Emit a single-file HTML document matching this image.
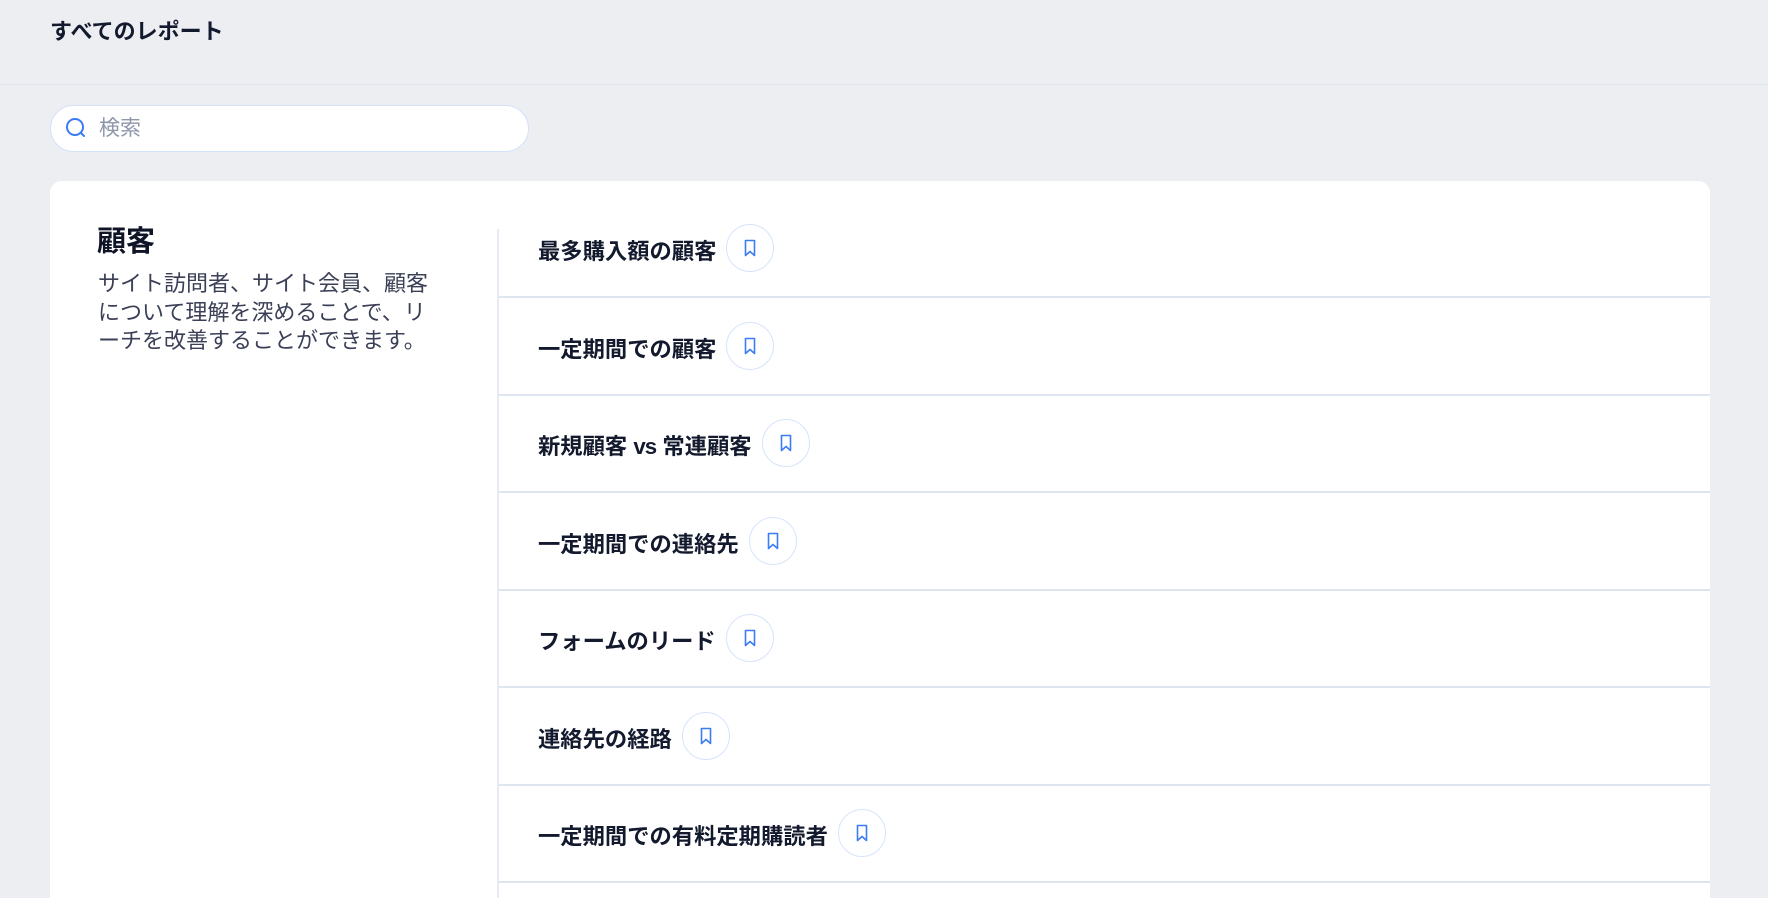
<!DOCTYPE html>
<html><head><meta charset="utf-8"><style>
html,body{margin:0;width:1768px;height:898px;overflow:hidden}
body{background:#eceef2;font-family:"Liberation Sans","Noto Sans CJK JP",sans-serif;position:relative;color:#141a2e}
.title{position:absolute;left:50px;top:17px;font-size:22px;font-weight:600;line-height:30px}
.hline{position:absolute;left:0;right:0;top:84px;height:1px;background:#dde3ec}
.search{position:absolute;left:50px;top:105px;width:477px;height:45px;border:1px solid #d3e2fb;border-radius:24px;background:#fff}
.search svg{position:absolute;left:14px;top:11px}
.search span{position:absolute;left:48px;top:10px;font-size:21px;color:#8f96aa;line-height:26px}
.card{position:absolute;left:50px;top:181px;width:1660px;height:717px;background:#fff;border-radius:12px 12px 0 0}
.h{position:absolute;left:47px;top:43px;font-size:29px;font-weight:700;line-height:36px;color:#0f1426}
.d{position:absolute;left:48px;top:89px;width:345px;font-size:22px;line-height:28.5px;color:#3b4057}
.vl{position:absolute;left:447px;top:48px;width:2px;height:680px;background:#e6eaf1}
.row{position:absolute;left:449px;width:1211px;height:96px;border-bottom:2px solid #dfe5ee;display:flex;align-items:center}
.row b{margin-left:39px;font-size:22.3px;font-weight:700;color:#141a2e;position:relative;top:2px}
.bm{margin-left:10px;width:46px;height:46px;border:1px solid #d6e4fb;border-radius:50%;display:flex;align-items:center;justify-content:center}
</style></head><body>
<div class="title">すべてのレポート</div>
<div class="hline"></div>
<div class="search"><svg width="22" height="22" viewBox="0 0 22 22"><circle cx="10" cy="10" r="8" fill="none" stroke="#3b7cf6" stroke-width="2"/><line x1="15.5" y1="15.5" x2="19" y2="19" stroke="#3b7cf6" stroke-width="2" stroke-linecap="round"/></svg><span>検索</span></div>
<div class="card">
<div class="h">顧客</div>
<div class="d">サイト訪問者、サイト会員、顧客について理解を深めることで、リーチを改善することができます。</div>
<div class="vl"></div>
<div class="row" style="top:19px"><b>最多購入額の顧客</b><div class="bm"><svg width="12" height="18" viewBox="0 0 12 18"><path d="M1.5 1.5H10.5V16.5L6 12.5L1.5 16.5Z" fill="none" stroke="#3b7cf6" stroke-width="1.6" stroke-linejoin="round"/></svg></div></div>
<div class="row" style="top:117px"><b>一定期間での顧客</b><div class="bm"><svg width="12" height="18" viewBox="0 0 12 18"><path d="M1.5 1.5H10.5V16.5L6 12.5L1.5 16.5Z" fill="none" stroke="#3b7cf6" stroke-width="1.6" stroke-linejoin="round"/></svg></div></div>
<div class="row" style="top:214px"><b>新規顧客 <span style="letter-spacing:-1px">vs</span> 常連顧客</b><div class="bm"><svg width="12" height="18" viewBox="0 0 12 18"><path d="M1.5 1.5H10.5V16.5L6 12.5L1.5 16.5Z" fill="none" stroke="#3b7cf6" stroke-width="1.6" stroke-linejoin="round"/></svg></div></div>
<div class="row" style="top:312px"><b>一定期間での連絡先</b><div class="bm"><svg width="12" height="18" viewBox="0 0 12 18"><path d="M1.5 1.5H10.5V16.5L6 12.5L1.5 16.5Z" fill="none" stroke="#3b7cf6" stroke-width="1.6" stroke-linejoin="round"/></svg></div></div>
<div class="row" style="top:409px"><b>フォームのリード</b><div class="bm"><svg width="12" height="18" viewBox="0 0 12 18"><path d="M1.5 1.5H10.5V16.5L6 12.5L1.5 16.5Z" fill="none" stroke="#3b7cf6" stroke-width="1.6" stroke-linejoin="round"/></svg></div></div>
<div class="row" style="top:507px"><b>連絡先の経路</b><div class="bm"><svg width="12" height="18" viewBox="0 0 12 18"><path d="M1.5 1.5H10.5V16.5L6 12.5L1.5 16.5Z" fill="none" stroke="#3b7cf6" stroke-width="1.6" stroke-linejoin="round"/></svg></div></div>
<div class="row" style="top:604px"><b>一定期間での有料定期購読者</b><div class="bm"><svg width="12" height="18" viewBox="0 0 12 18"><path d="M1.5 1.5H10.5V16.5L6 12.5L1.5 16.5Z" fill="none" stroke="#3b7cf6" stroke-width="1.6" stroke-linejoin="round"/></svg></div></div>
</div>
</body></html>
